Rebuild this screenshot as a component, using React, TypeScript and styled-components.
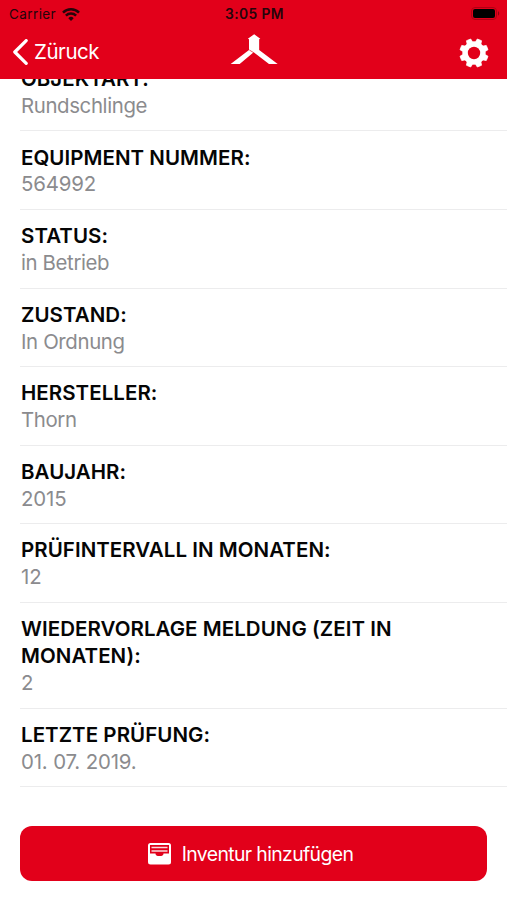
import React from "react";
import styled, { createGlobalStyle } from "styled-components";

const RED = "#e2001a";

const GlobalStyle = createGlobalStyle`
  * { box-sizing: border-box; }
  html, body { margin: 0; padding: 0; background: #fff; }
  body { font-family: Inter, "Liberation Sans", sans-serif; overflow: hidden; }
`;

const Screen = styled.div`
  display: flex;
  flex-direction: column;
  width: 507px;
  height: 900px;
  overflow: hidden;
  background: #fff;
`;

const Header = styled.header`
  flex: none;
  height: 79px;
  background: ${RED};
`;

const StatusBar = styled.div`
  display: grid;
  grid-template-columns: 1fr auto 1fr;
  align-items: center;
  height: 27px;
  padding: 0 7px 0 9px;
  color: #25050a;
  font-size: 13.5px;
  line-height: 27px;
`;

const Carrier = styled.div`
  display: flex;
  align-items: center;
  gap: 6px;
  padding-top: 1px;
  line-height: 26px;
  letter-spacing: 0.4px;
`;

const Clock = styled.div`
  padding-top: 1px;
  line-height: 26px;
  font-size: 13.8px;
  font-weight: 600;
  letter-spacing: 0.4px;
`;

const BatterySlot = styled.div`
  display: flex;
  justify-content: flex-end;
`;

const NavBar = styled.nav`
  display: grid;
  grid-template-columns: 1fr auto 1fr;
  align-items: center;
  height: 51px;
  padding: 0 12px;
`;

const BackButton = styled.button`
  display: flex;
  align-items: center;
  gap: 6px;
  padding: 0 0 2px;
  border: 0;
  background: none;
  color: #fff;
  font: 400 20.5px/27px Inter, sans-serif;
  letter-spacing: -0.45px;
`;

const SettingsButton = styled.button`
  justify-self: end;
  display: flex;
  margin-right: 6px;
  padding: 0;
  border: 0;
  background: none;
`;

const Viewport = styled.main`
  flex: 1;
  min-height: 0;
  overflow: hidden;
`;

const List = styled.dl`
  margin: -26.2px 0 0 20px;
`;

const Row = styled.div`
  padding: 13.1px 80px 10.6px 1px;
  border-bottom: 1px solid #ececed;
`;

const Label = styled.dt`
  font-size: 20.5px;
  font-weight: 600;
  line-height: 26.95px;
  letter-spacing: 0.05px;
  color: #050505;
`;

const Value = styled.dd<{ $numeric: boolean }>`
  margin: 0;
  font-size: 20.4px;
  line-height: 26.95px;
  letter-spacing: ${(p) => (p.$numeric ? -0.15 : -0.37)}px;
  color: #8b8b8e;
`;

const AddButton = styled.button`
  display: flex;
  align-items: center;
  justify-content: center;
  gap: 11px;
  width: 467px;
  height: 55px;
  margin: 39px 0 0 20px;
  padding: 1px 6px 0 0;
  border: 0;
  border-radius: 12px;
  background: ${RED};
  color: #fff;
  font: 400 19.4px/27px Inter, sans-serif;
  letter-spacing: -0.62px;
`;

const ButtonText = styled.span`
  padding-top: 1px;
`;

const LogoIcon = styled.svg`
  align-self: start;
  display: block;
  margin-top: 3px;
`;

const WifiIcon = () => (
  <svg width="18" height="13" viewBox="0 0 18 13" fill="none" stroke="#25050a" strokeWidth="2.5">
    <path d="M1 4.6a11.3 11.3 0 0 1 16 0" />
    <path d="M3.9 7.7a7.2 7.2 0 0 1 10.2 0" />
    <path d="M9 13 6.3 10.2a3.8 3.8 0 0 1 5.4 0z" fill="#25050a" stroke="none" />
  </svg>
);

const BatteryIcon = () => (
  <svg width="29" height="13" viewBox="0 0 29 13">
    <rect x="0.5" y="0.5" width="25" height="12" rx="3.5" fill="none" stroke="#b00014" />
    <rect x="2" y="2" width="22" height="9" rx="2" fill="#000" />
    <path d="M27 4.3c1.6.6 1.6 3.8 0 4.4z" fill="#8d0010" />
  </svg>
);

const ChevronIcon = () => (
  <svg width="16" height="26" viewBox="0 0 16 26" fill="none" stroke="#fff" strokeWidth="3.2">
    <path d="M14.2 1.6 2.8 13l11.4 11.4" strokeLinecap="round" strokeLinejoin="round" />
  </svg>
);

const Logo = () => (
  <LogoIcon width="56" height="40" viewBox="0 0 168 120">
    <path
      d="M84.5 13 103 26l-3.5 2V60L155 102H129L83 67 41 102H14L69 60V28l-3.5-2z"
      fill="#fff"
    />
    <path d="M70 60 83 68" stroke={RED} strokeWidth="2" />
  </LogoIcon>
);

const point = (r: number, deg: number) => {
  const a = (deg * Math.PI) / 180;
  return `${(15 + r * Math.sin(a)).toFixed(2)} ${(15 - r * Math.cos(a)).toFixed(2)}`;
};

const gearOutline = Array.from({ length: 8 }, (_, i) => {
  const c = i * 45 + 22.5;
  return [point(11.3, c - 15), point(14.4, c - 9), point(14.4, c + 9), point(11.3, c + 15)].join("L");
}).join("L");

const GearIcon = () => (
  <svg width="30" height="30" viewBox="0 0 30 30">
    <path d={`M${gearOutline}Z`} fill="#fff" stroke="#fff" strokeWidth="0.8" strokeLinejoin="round" />
    <circle cx="15" cy="15" r="6.2" fill={RED} />
  </svg>
);

const TrayIcon = () => (
  <svg width="23" height="22" viewBox="0 0 23 22">
    <rect width="23" height="21.5" rx="2.5" fill="#fff" />
    <path d="M2 2h19v8.5h-5.5a4 2.6 0 0 1-8 0H2z" fill={RED} />
    <path d="M3.5 4.6h16M3.5 8h16" stroke="#fff" strokeOpacity="0.85" strokeWidth="1.5" />
  </svg>
);

const fields = [
  { label: "OBJEKTART:", value: "Rundschlinge" },
  { label: "EQUIPMENT NUMMER:", value: "564992" },
  { label: "STATUS:", value: "in Betrieb" },
  { label: "ZUSTAND:", value: "In Ordnung" },
  { label: "HERSTELLER:", value: "Thorn" },
  { label: "BAUJAHR:", value: "2015" },
  { label: "PRÜFINTERVALL IN MONATEN:", value: "12" },
  { label: "WIEDERVORLAGE MELDUNG (ZEIT IN MONATEN):", value: "2" },
  { label: "LETZTE PRÜFUNG:", value: "01. 07. 2019." },
];

export default function App() {
  return (
    <Screen>
      <GlobalStyle />
      <Header>
        <StatusBar>
          <Carrier>
            Carrier
            <WifiIcon />
          </Carrier>
          <Clock>3:05 PM</Clock>
          <BatterySlot>
            <BatteryIcon />
          </BatterySlot>
        </StatusBar>
        <NavBar>
          <BackButton>
            <ChevronIcon />
            Züruck
          </BackButton>
          <Logo />
          <SettingsButton aria-label="Einstellungen">
            <GearIcon />
          </SettingsButton>
        </NavBar>
      </Header>
      <Viewport>
        <List>
          {fields.map((f) => (
            <Row key={f.label}>
              <Label>{f.label}</Label>
              <Value $numeric={/^\d/.test(f.value)}>{f.value}</Value>
            </Row>
          ))}
        </List>
        <AddButton>
          <TrayIcon />
          <ButtonText>Inventur hinzufügen</ButtonText>
        </AddButton>
      </Viewport>
    </Screen>
  );
}
